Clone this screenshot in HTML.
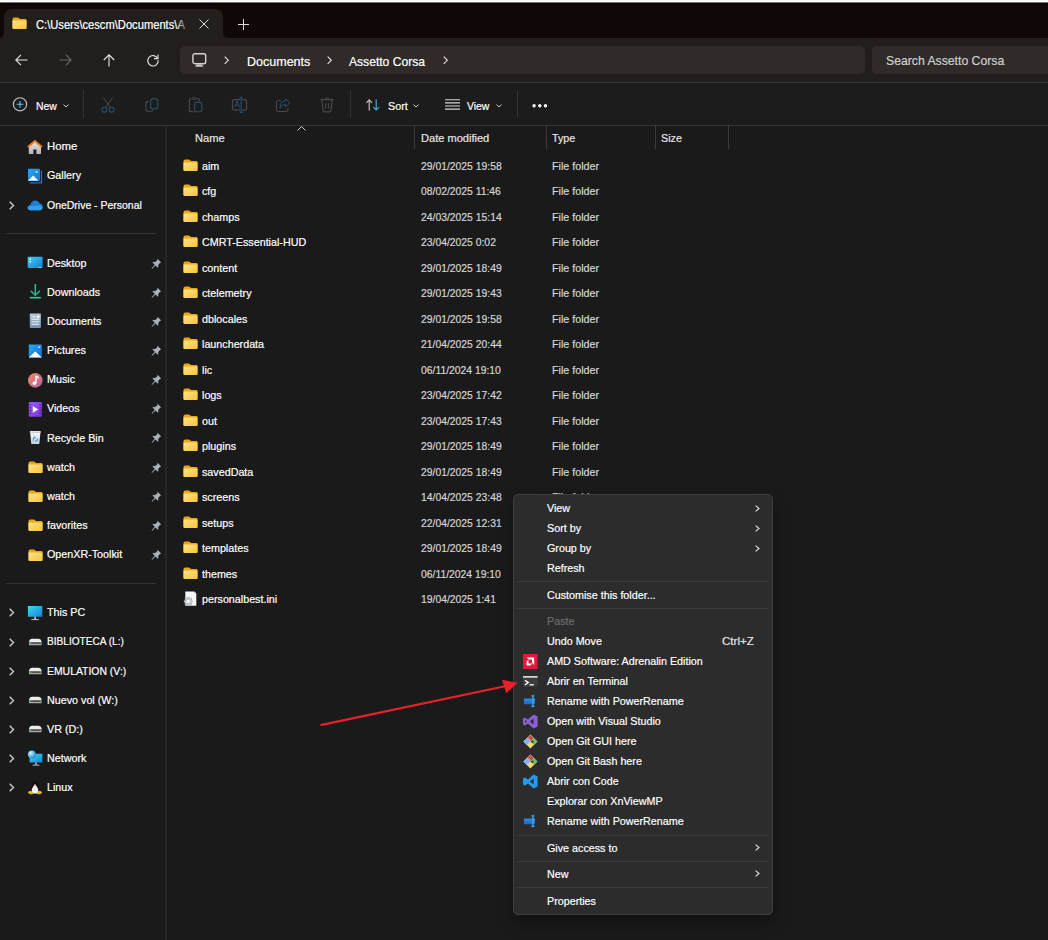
<!DOCTYPE html>
<html><head><meta charset="utf-8"><style>
html,body{margin:0;padding:0;}
body{width:1048px;height:940px;position:relative;overflow:hidden;background:#1a1a1a;font-family:"Liberation Sans", sans-serif;}
.t{position:absolute;white-space:nowrap;line-height:1;-webkit-text-stroke:0.2px currentColor;}
.r{position:absolute;}
svg{overflow:visible}
</style></head><body>
<div class="r" style="left:0px;top:0px;width:1048px;height:1px;background:#f9f9f9;"></div>
<div class="r" style="left:0px;top:1px;width:1048px;height:1px;background:#ffffff;"></div>
<div class="r" style="left:0px;top:2px;width:1048px;height:1px;background:#777070;"></div>
<div class="r" style="left:0px;top:3px;width:1048px;height:1px;background:#0b0302;"></div>
<div class="r" style="left:0px;top:4px;width:1048px;height:34px;background:#100806;"></div>
<div class="r" style="left:0px;top:30px;width:1048px;height:9px;background:#221e1b;"></div>
<div class="r" style="left:0px;top:39px;width:1048px;height:43px;background:#221e1b;"></div>
<div class="r" style="left:4px;top:9px;width:219px;height:30px;background:#221e1b;border-radius:8px 8px 0 0;"></div>
<div class="r" style="left:-20px;top:3px;width:24px;height:35px;background:#100806;border-radius:0 0 5px 0;"></div>
<div class="r" style="left:223px;top:3px;width:900px;height:35px;background:#100806;border-radius:0 0 0 5px;"></div>
<div class="r" style="left:0px;top:2px;width:1048px;height:1px;background:#777070;"></div>
<div class="r" style="left:0px;top:3px;width:1048px;height:1px;background:#0b0302;"></div>
<div class="r" style="left:0px;top:82px;width:1048px;height:1px;background:#363636;"></div>
<div class="r" style="left:0px;top:83px;width:1048px;height:42px;background:#1c1c1c;"></div>
<div class="r" style="left:0px;top:125px;width:1048px;height:1px;background:#373737;"></div>
<div class="r" style="left:0px;top:126px;width:1048px;height:814px;background:#1a1a1a;"></div>
<div class="r" style="left:165px;top:126px;width:2px;height:814px;background:#262626;"></div>
<div class="r" style="left:180px;top:46px;width:685px;height:28px;background:#302a28;border-radius:5px;"></div>
<div class="r" style="left:872px;top:46px;width:200px;height:28px;background:#302b28;border-radius:5px;"></div>
<svg width="0" height="0" style="position:absolute"><defs>
<linearGradient id="fg" x1="0" y1="0" x2="1" y2="1"><stop offset="0" stop-color="#ffe389"/><stop offset="1" stop-color="#f8c43a"/></linearGradient>
</defs></svg>
<svg style="position:absolute;left:12px;top:17px" width="15" height="12" viewBox="0 0 15 12"><path d="M0.5 2.2 Q0.5 0.5 2.2 0.5 H5.6 Q6.4 0.5 7.0 1.1 L7.9 2.0 H13.3 Q14.5 2.0 14.5 3.2 V10.8 Q14.5 12 13.3 12 H1.7 Q0.5 12 0.5 10.8 Z" fill="#e9a812"/>
<path d="M0.5 3.6 H14.5 V10.8 Q14.5 12 13.3 12 H1.7 Q0.5 12 0.5 10.8 Z" fill="url(#fg)"/></svg>
<div class="t" style="left:36px;top:18.64px;font-size:12px;color:#ffffff;transform:scaleX(0.93);transform-origin:0 0;">C:\Users\cescm\Documents\A</div>
<div class="r" style="left:176px;top:12px;width:14px;height:24px;background:linear-gradient(90deg,rgba(34,30,27,0),#221e1b);"></div>
<svg style="position:absolute;left:199px;top:19px" width="10" height="10" viewBox="0 0 10 10"><path d="M0.5 0.5 L9.5 9.5 M9.5 0.5 L0.5 9.5" stroke="#dcdcdc" stroke-width="1"/></svg>
<svg style="position:absolute;left:238px;top:19px" width="11" height="11" viewBox="0 0 11 11"><path d="M5.5 0 V11 M0 5.5 H11" stroke="#dcdcdc" stroke-width="1"/></svg>
<svg style="position:absolute;left:15px;top:54px" width="13" height="12" viewBox="0 0 13 12"><path d="M0.8 6 H12.5 M6 0.8 L0.8 6 L6 11.2" stroke="#e6e6e6" stroke-width="1.1" fill="none"/></svg>
<svg style="position:absolute;left:59px;top:54px" width="13" height="12" viewBox="0 0 13 12"><g transform="translate(13,0) scale(-1,1)"><path d="M0.8 6 H12.5 M6 0.8 L0.8 6 L6 11.2" stroke="#6b6765" stroke-width="1.1" fill="none"/></g></svg>
<svg style="position:absolute;left:103px;top:54px" width="12" height="13" viewBox="0 0 12 13"><path d="M6 0.8 V12.5 M0.8 6 L6 0.8 L11.2 6" stroke="#e6e6e6" stroke-width="1.1" fill="none"/></svg>
<svg style="position:absolute;left:147px;top:54px" width="12" height="12" viewBox="0 0 12 12"><path d="M10.6 4.3 A5.2 5.2 0 1 0 11.2 6.3" stroke="#e6e6e6" stroke-width="1.1" fill="none"/><path d="M11 0.6 V4.6 H7" stroke="#e6e6e6" stroke-width="1.1" fill="none"/></svg>
<svg style="position:absolute;left:192px;top:53px" width="15" height="14" viewBox="0 0 15 14"><rect x="0.9" y="0.8" width="12.8" height="9.9" rx="2" stroke="#d4d4d4" stroke-width="1.4" fill="none"/><path d="M3.2 13.8 L4.6 11.4 H10 L11.4 13.8 Z" fill="#c8c8c8"/></svg>
<svg style="position:absolute;left:224px;top:56px" width="5" height="9" viewBox="0 0 5 9"><path d="M0.7 0.7 L4.3 4.3 L0.7 7.9" stroke="#e6e6e6" stroke-width="1.1" fill="none"/></svg>
<svg style="position:absolute;left:327px;top:56px" width="5" height="9" viewBox="0 0 5 9"><path d="M0.7 0.7 L4.3 4.3 L0.7 7.9" stroke="#e6e6e6" stroke-width="1.1" fill="none"/></svg>
<svg style="position:absolute;left:443px;top:56px" width="5" height="9" viewBox="0 0 5 9"><path d="M0.7 0.7 L4.3 4.3 L0.7 7.9" stroke="#e6e6e6" stroke-width="1.1" fill="none"/></svg>
<div class="t" style="left:246.7px;top:54.50px;font-size:13px;color:#ffffff;transform:scaleX(0.963);transform-origin:0 0;">Documents</div>
<div class="t" style="left:349px;top:54.50px;font-size:13px;color:#ffffff;transform:scaleX(0.93);transform-origin:0 0;">Assetto Corsa</div>
<div class="t" style="left:885.6px;top:54.40px;font-size:13px;color:#cfcfcf;transform:scaleX(0.94);transform-origin:0 0;">Search Assetto Corsa</div>
<svg style="position:absolute;left:13px;top:97px" width="15" height="15" viewBox="0 0 15 15"><circle cx="7" cy="7.3" r="6.6" stroke="#c8c8c8" stroke-width="1.1" fill="none"/><path d="M7 3.9 V10.7 M3.6 7.3 H10.4" stroke="#5cc4f6" stroke-width="1.1"/></svg>
<div class="t" style="left:35.8px;top:99.78px;font-size:11.6px;color:#ffffff;transform:scaleX(0.89822);transform-origin:0 0;">New</div>
<svg style="position:absolute;left:63px;top:104px" width="6" height="4" viewBox="0 0 6 4"><path d="M0.5 0.5 L3 3 L5.5 0.5" stroke="#cccccc" stroke-width="1" fill="none"/></svg>
<div class="r" style="left:83px;top:90px;width:1px;height:28px;background:#333333;"></div>
<svg style="position:absolute;left:101px;top:97px" width="14" height="16" viewBox="0 0 14 16"><path d="M2.4 0.7 L9.3 10.3 M11.6 0.7 L4.7 10.3" stroke="#4a4a4a" stroke-width="1"/><circle cx="3.4" cy="12.7" r="2.4" stroke="#24506e" stroke-width="1.1" fill="none"/><circle cx="10.6" cy="12.7" r="2.4" stroke="#24506e" stroke-width="1.1" fill="none"/></svg>
<svg style="position:absolute;left:145px;top:98px" width="14" height="14" viewBox="0 0 14 14"><rect x="5.6" y="0.9" width="7.2" height="9.8" rx="2" stroke="#24506e" stroke-width="1.1" fill="none"/><path d="M3.3 3.4 Q0.9 3.6 0.9 6 V11 Q0.9 13.3 3.2 13.3 H6 Q8 13.3 8.2 11.5" stroke="#4a4a4a" stroke-width="1.1" fill="none"/></svg>
<svg style="position:absolute;left:188px;top:97px" width="15" height="16" viewBox="0 0 15 16"><path d="M2.8 1.8 H2.4 Q1.4 1.8 1.4 2.8 V13.8 Q1.4 14.6 2.4 14.6 H5.2" stroke="#4a4a4a" stroke-width="1.1" fill="none"/><ellipse cx="6.3" cy="1.5" rx="2.6" ry="0.9" fill="none" stroke="#4a4a4a" stroke-width="1"/><path d="M9.2 1.8 H10.2 Q11.4 1.8 11.4 3 V4.2" stroke="#4a4a4a" stroke-width="1.1" fill="none"/><rect x="6.6" y="5.4" width="7.2" height="9.4" rx="1.6" stroke="#24506e" stroke-width="1.1" fill="none"/></svg>
<svg style="position:absolute;left:231px;top:97px" width="17" height="16" viewBox="0 0 17 16"><path d="M9 2.6 H3.6 Q1.4 2.6 1.4 4.8 V11 Q1.4 13.1 3.6 13.1 H9 M11.3 2.6 H13.5 Q15.6 2.6 15.6 4.8 V11 Q15.6 13.1 13.5 13.1 H11.3" stroke="#4a4a4a" stroke-width="1.1" fill="none"/><path d="M10.1 0.6 V15.4 M8.6 0.6 H11.6 M8.6 15.4 H11.6" stroke="#24506e" stroke-width="1.1" fill="none"/><path d="M3.6 10.4 L6.1 3.8 L8.6 10.4 M4.5 8.2 H7.7" stroke="#24506e" stroke-width="1" fill="none"/></svg>
<svg style="position:absolute;left:276px;top:98px" width="15" height="14" viewBox="0 0 15 14"><path d="M5 2.5 H2.5 Q0.5 2.5 0.5 4.5 V11.5 Q0.5 13.5 2.5 13.5 H10 Q12 13.5 12 11.5 V10" stroke="#4a4a4a" stroke-width="1" fill="none"/><path d="M9.5 0.8 L14 4.8 L9.5 8.6 V6.5 Q5.5 6.5 4 10 Q4 3 9.5 3 Z" stroke="#24506e" stroke-width="1" fill="none"/></svg>
<svg style="position:absolute;left:320px;top:97px" width="14" height="16" viewBox="0 0 14 16"><path d="M0.6 2.6 H13.4 M5.2 2.4 Q5.5 0.8 7 0.8 Q8.5 0.8 8.8 2.4 M1.8 2.6 L3.1 13.6 Q3.3 14.9 4.6 14.9 H9.4 Q10.7 14.9 10.9 13.6 L12.2 2.6 M5.6 6 V11.6 M8.4 6 V11.6" stroke="#4a4a4a" stroke-width="1.1" fill="none"/></svg>
<div class="r" style="left:350px;top:90px;width:1px;height:28px;background:#333333;"></div>
<svg style="position:absolute;left:365.5px;top:99px" width="15" height="12" viewBox="0 0 15 12"><path d="M3.2 11.4 V0.9 M0.4 3.8 L3.2 0.9 L6 3.8" stroke="#bdbdbd" stroke-width="1.2" fill="none"/><path d="M10.2 0.5 V11 M7.3 8.1 L10.2 11 L13.1 8.1" stroke="#3fa9e6" stroke-width="1.2" fill="none"/></svg>
<div class="t" style="left:387.8px;top:99.78px;font-size:11.6px;color:#ffffff;transform:scaleX(0.926);transform-origin:0 0;">Sort</div>
<svg style="position:absolute;left:413px;top:104px" width="6" height="4" viewBox="0 0 6 4"><path d="M0.5 0.5 L3 3 L5.5 0.5" stroke="#cccccc" stroke-width="1" fill="none"/></svg>
<svg style="position:absolute;left:445px;top:99px" width="15" height="12" viewBox="0 0 15 12"><path d="M0 0.8 H15 M0 3.9 H15 M0 7 H15 M0 10.1 H15" stroke="#d6d6d6" stroke-width="1.1"/></svg>
<div class="t" style="left:467px;top:99.78px;font-size:11.6px;color:#ffffff;transform:scaleX(0.89822);transform-origin:0 0;">View</div>
<svg style="position:absolute;left:496px;top:104px" width="6" height="4" viewBox="0 0 6 4"><path d="M0.5 0.5 L3 3 L5.5 0.5" stroke="#cccccc" stroke-width="1" fill="none"/></svg>
<div class="r" style="left:517px;top:90px;width:1px;height:28px;background:#333333;"></div>
<svg style="position:absolute;left:530px;top:102px" width="20" height="8" viewBox="0 0 20 8"><circle cx="4.1" cy="3.7" r="1.7" fill="#ffffff"/><circle cx="9.8" cy="3.7" r="1.7" fill="#ffffff"/><circle cx="15.5" cy="3.7" r="1.7" fill="#ffffff"/></svg>
<div class="t" style="left:195px;top:132.18px;font-size:11.6px;color:#e6e6e6;transform:scaleX(0.9630400000000001);transform-origin:0 0;">Name</div>
<svg style="position:absolute;left:297px;top:126px" width="9" height="5" viewBox="0 0 9 5"><path d="M0.5 4.5 L4.5 0.5 L8.5 4.5" stroke="#cfcfcf" stroke-width="1" fill="none"/></svg>
<div class="r" style="left:414px;top:126px;width:1px;height:23px;background:#3a3a3a;"></div>
<div class="r" style="left:546px;top:126px;width:1px;height:23px;background:#3a3a3a;"></div>
<div class="r" style="left:655px;top:126px;width:1px;height:23px;background:#3a3a3a;"></div>
<div class="r" style="left:728px;top:126px;width:1px;height:23px;background:#3a3a3a;"></div>
<div class="t" style="left:420.6px;top:132.18px;font-size:11.6px;color:#e6e6e6;transform:scaleX(0.9537800000000001);transform-origin:0 0;">Date modified</div>
<div class="t" style="left:552px;top:132.18px;font-size:11.6px;color:#e6e6e6;transform:scaleX(0.926);transform-origin:0 0;">Type</div>
<div class="t" style="left:661px;top:132.18px;font-size:11.6px;color:#e6e6e6;transform:scaleX(0.926);transform-origin:0 0;">Size</div>
<svg style="position:absolute;left:183px;top:159px" width="15" height="12" viewBox="0 0 15 12"><path d="M0.5 2.2 Q0.5 0.5 2.2 0.5 H5.6 Q6.4 0.5 7.0 1.1 L7.9 2.0 H13.3 Q14.5 2.0 14.5 3.2 V10.8 Q14.5 12 13.3 12 H1.7 Q0.5 12 0.5 10.8 Z" fill="#e9a812"/>
<path d="M0.5 3.6 H14.5 V10.8 Q14.5 12 13.3 12 H1.7 Q0.5 12 0.5 10.8 Z" fill="url(#fg)"/></svg>
<div class="t" style="left:202.2px;top:159.88px;font-size:11.6px;color:#ffffff;transform:scaleX(0.926);transform-origin:0 0;">aim</div>
<div class="t" style="left:420.6px;top:159.88px;font-size:11.6px;color:#d6d6d6;transform:scaleX(0.89359);transform-origin:0 0;">29/01/2025 19:58</div>
<div class="t" style="left:552px;top:159.88px;font-size:11.6px;color:#d6d6d6;transform:scaleX(0.926);transform-origin:0 0;">File folder</div>
<svg style="position:absolute;left:183px;top:184px" width="15" height="12" viewBox="0 0 15 12"><path d="M0.5 2.2 Q0.5 0.5 2.2 0.5 H5.6 Q6.4 0.5 7.0 1.1 L7.9 2.0 H13.3 Q14.5 2.0 14.5 3.2 V10.8 Q14.5 12 13.3 12 H1.7 Q0.5 12 0.5 10.8 Z" fill="#e9a812"/>
<path d="M0.5 3.6 H14.5 V10.8 Q14.5 12 13.3 12 H1.7 Q0.5 12 0.5 10.8 Z" fill="url(#fg)"/></svg>
<div class="t" style="left:202.2px;top:185.38px;font-size:11.6px;color:#ffffff;transform:scaleX(0.926);transform-origin:0 0;">cfg</div>
<div class="t" style="left:420.6px;top:185.38px;font-size:11.6px;color:#d6d6d6;transform:scaleX(0.89359);transform-origin:0 0;">08/02/2025 11:46</div>
<div class="t" style="left:552px;top:185.38px;font-size:11.6px;color:#d6d6d6;transform:scaleX(0.926);transform-origin:0 0;">File folder</div>
<svg style="position:absolute;left:183px;top:210px" width="15" height="12" viewBox="0 0 15 12"><path d="M0.5 2.2 Q0.5 0.5 2.2 0.5 H5.6 Q6.4 0.5 7.0 1.1 L7.9 2.0 H13.3 Q14.5 2.0 14.5 3.2 V10.8 Q14.5 12 13.3 12 H1.7 Q0.5 12 0.5 10.8 Z" fill="#e9a812"/>
<path d="M0.5 3.6 H14.5 V10.8 Q14.5 12 13.3 12 H1.7 Q0.5 12 0.5 10.8 Z" fill="url(#fg)"/></svg>
<div class="t" style="left:202.2px;top:210.88px;font-size:11.6px;color:#ffffff;transform:scaleX(0.926);transform-origin:0 0;">champs</div>
<div class="t" style="left:420.6px;top:210.88px;font-size:11.6px;color:#d6d6d6;transform:scaleX(0.89359);transform-origin:0 0;">24/03/2025 15:14</div>
<div class="t" style="left:552px;top:210.88px;font-size:11.6px;color:#d6d6d6;transform:scaleX(0.926);transform-origin:0 0;">File folder</div>
<svg style="position:absolute;left:183px;top:235px" width="15" height="12" viewBox="0 0 15 12"><path d="M0.5 2.2 Q0.5 0.5 2.2 0.5 H5.6 Q6.4 0.5 7.0 1.1 L7.9 2.0 H13.3 Q14.5 2.0 14.5 3.2 V10.8 Q14.5 12 13.3 12 H1.7 Q0.5 12 0.5 10.8 Z" fill="#e9a812"/>
<path d="M0.5 3.6 H14.5 V10.8 Q14.5 12 13.3 12 H1.7 Q0.5 12 0.5 10.8 Z" fill="url(#fg)"/></svg>
<div class="t" style="left:202.2px;top:236.38px;font-size:11.6px;color:#ffffff;transform:scaleX(0.926);transform-origin:0 0;">CMRT-Essential-HUD</div>
<div class="t" style="left:420.6px;top:236.38px;font-size:11.6px;color:#d6d6d6;transform:scaleX(0.89359);transform-origin:0 0;">23/04/2025 0:02</div>
<div class="t" style="left:552px;top:236.38px;font-size:11.6px;color:#d6d6d6;transform:scaleX(0.926);transform-origin:0 0;">File folder</div>
<svg style="position:absolute;left:183px;top:261px" width="15" height="12" viewBox="0 0 15 12"><path d="M0.5 2.2 Q0.5 0.5 2.2 0.5 H5.6 Q6.4 0.5 7.0 1.1 L7.9 2.0 H13.3 Q14.5 2.0 14.5 3.2 V10.8 Q14.5 12 13.3 12 H1.7 Q0.5 12 0.5 10.8 Z" fill="#e9a812"/>
<path d="M0.5 3.6 H14.5 V10.8 Q14.5 12 13.3 12 H1.7 Q0.5 12 0.5 10.8 Z" fill="url(#fg)"/></svg>
<div class="t" style="left:202.2px;top:261.88px;font-size:11.6px;color:#ffffff;transform:scaleX(0.926);transform-origin:0 0;">content</div>
<div class="t" style="left:420.6px;top:261.88px;font-size:11.6px;color:#d6d6d6;transform:scaleX(0.89359);transform-origin:0 0;">29/01/2025 18:49</div>
<div class="t" style="left:552px;top:261.88px;font-size:11.6px;color:#d6d6d6;transform:scaleX(0.926);transform-origin:0 0;">File folder</div>
<svg style="position:absolute;left:183px;top:286px" width="15" height="12" viewBox="0 0 15 12"><path d="M0.5 2.2 Q0.5 0.5 2.2 0.5 H5.6 Q6.4 0.5 7.0 1.1 L7.9 2.0 H13.3 Q14.5 2.0 14.5 3.2 V10.8 Q14.5 12 13.3 12 H1.7 Q0.5 12 0.5 10.8 Z" fill="#e9a812"/>
<path d="M0.5 3.6 H14.5 V10.8 Q14.5 12 13.3 12 H1.7 Q0.5 12 0.5 10.8 Z" fill="url(#fg)"/></svg>
<div class="t" style="left:202.2px;top:287.38px;font-size:11.6px;color:#ffffff;transform:scaleX(0.926);transform-origin:0 0;">ctelemetry</div>
<div class="t" style="left:420.6px;top:287.38px;font-size:11.6px;color:#d6d6d6;transform:scaleX(0.89359);transform-origin:0 0;">29/01/2025 19:43</div>
<div class="t" style="left:552px;top:287.38px;font-size:11.6px;color:#d6d6d6;transform:scaleX(0.926);transform-origin:0 0;">File folder</div>
<svg style="position:absolute;left:183px;top:312px" width="15" height="12" viewBox="0 0 15 12"><path d="M0.5 2.2 Q0.5 0.5 2.2 0.5 H5.6 Q6.4 0.5 7.0 1.1 L7.9 2.0 H13.3 Q14.5 2.0 14.5 3.2 V10.8 Q14.5 12 13.3 12 H1.7 Q0.5 12 0.5 10.8 Z" fill="#e9a812"/>
<path d="M0.5 3.6 H14.5 V10.8 Q14.5 12 13.3 12 H1.7 Q0.5 12 0.5 10.8 Z" fill="url(#fg)"/></svg>
<div class="t" style="left:202.2px;top:312.88px;font-size:11.6px;color:#ffffff;transform:scaleX(0.926);transform-origin:0 0;">dblocales</div>
<div class="t" style="left:420.6px;top:312.88px;font-size:11.6px;color:#d6d6d6;transform:scaleX(0.89359);transform-origin:0 0;">29/01/2025 19:58</div>
<div class="t" style="left:552px;top:312.88px;font-size:11.6px;color:#d6d6d6;transform:scaleX(0.926);transform-origin:0 0;">File folder</div>
<svg style="position:absolute;left:183px;top:337px" width="15" height="12" viewBox="0 0 15 12"><path d="M0.5 2.2 Q0.5 0.5 2.2 0.5 H5.6 Q6.4 0.5 7.0 1.1 L7.9 2.0 H13.3 Q14.5 2.0 14.5 3.2 V10.8 Q14.5 12 13.3 12 H1.7 Q0.5 12 0.5 10.8 Z" fill="#e9a812"/>
<path d="M0.5 3.6 H14.5 V10.8 Q14.5 12 13.3 12 H1.7 Q0.5 12 0.5 10.8 Z" fill="url(#fg)"/></svg>
<div class="t" style="left:202.2px;top:338.38px;font-size:11.6px;color:#ffffff;transform:scaleX(0.926);transform-origin:0 0;">launcherdata</div>
<div class="t" style="left:420.6px;top:338.38px;font-size:11.6px;color:#d6d6d6;transform:scaleX(0.89359);transform-origin:0 0;">21/04/2025 20:44</div>
<div class="t" style="left:552px;top:338.38px;font-size:11.6px;color:#d6d6d6;transform:scaleX(0.926);transform-origin:0 0;">File folder</div>
<svg style="position:absolute;left:183px;top:363px" width="15" height="12" viewBox="0 0 15 12"><path d="M0.5 2.2 Q0.5 0.5 2.2 0.5 H5.6 Q6.4 0.5 7.0 1.1 L7.9 2.0 H13.3 Q14.5 2.0 14.5 3.2 V10.8 Q14.5 12 13.3 12 H1.7 Q0.5 12 0.5 10.8 Z" fill="#e9a812"/>
<path d="M0.5 3.6 H14.5 V10.8 Q14.5 12 13.3 12 H1.7 Q0.5 12 0.5 10.8 Z" fill="url(#fg)"/></svg>
<div class="t" style="left:202.2px;top:363.88px;font-size:11.6px;color:#ffffff;transform:scaleX(0.926);transform-origin:0 0;">lic</div>
<div class="t" style="left:420.6px;top:363.88px;font-size:11.6px;color:#d6d6d6;transform:scaleX(0.89359);transform-origin:0 0;">06/11/2024 19:10</div>
<div class="t" style="left:552px;top:363.88px;font-size:11.6px;color:#d6d6d6;transform:scaleX(0.926);transform-origin:0 0;">File folder</div>
<svg style="position:absolute;left:183px;top:388px" width="15" height="12" viewBox="0 0 15 12"><path d="M0.5 2.2 Q0.5 0.5 2.2 0.5 H5.6 Q6.4 0.5 7.0 1.1 L7.9 2.0 H13.3 Q14.5 2.0 14.5 3.2 V10.8 Q14.5 12 13.3 12 H1.7 Q0.5 12 0.5 10.8 Z" fill="#e9a812"/>
<path d="M0.5 3.6 H14.5 V10.8 Q14.5 12 13.3 12 H1.7 Q0.5 12 0.5 10.8 Z" fill="url(#fg)"/></svg>
<div class="t" style="left:202.2px;top:389.38px;font-size:11.6px;color:#ffffff;transform:scaleX(0.926);transform-origin:0 0;">logs</div>
<div class="t" style="left:420.6px;top:389.38px;font-size:11.6px;color:#d6d6d6;transform:scaleX(0.89359);transform-origin:0 0;">23/04/2025 17:42</div>
<div class="t" style="left:552px;top:389.38px;font-size:11.6px;color:#d6d6d6;transform:scaleX(0.926);transform-origin:0 0;">File folder</div>
<svg style="position:absolute;left:183px;top:414px" width="15" height="12" viewBox="0 0 15 12"><path d="M0.5 2.2 Q0.5 0.5 2.2 0.5 H5.6 Q6.4 0.5 7.0 1.1 L7.9 2.0 H13.3 Q14.5 2.0 14.5 3.2 V10.8 Q14.5 12 13.3 12 H1.7 Q0.5 12 0.5 10.8 Z" fill="#e9a812"/>
<path d="M0.5 3.6 H14.5 V10.8 Q14.5 12 13.3 12 H1.7 Q0.5 12 0.5 10.8 Z" fill="url(#fg)"/></svg>
<div class="t" style="left:202.2px;top:414.88px;font-size:11.6px;color:#ffffff;transform:scaleX(0.926);transform-origin:0 0;">out</div>
<div class="t" style="left:420.6px;top:414.88px;font-size:11.6px;color:#d6d6d6;transform:scaleX(0.89359);transform-origin:0 0;">23/04/2025 17:43</div>
<div class="t" style="left:552px;top:414.88px;font-size:11.6px;color:#d6d6d6;transform:scaleX(0.926);transform-origin:0 0;">File folder</div>
<svg style="position:absolute;left:183px;top:439px" width="15" height="12" viewBox="0 0 15 12"><path d="M0.5 2.2 Q0.5 0.5 2.2 0.5 H5.6 Q6.4 0.5 7.0 1.1 L7.9 2.0 H13.3 Q14.5 2.0 14.5 3.2 V10.8 Q14.5 12 13.3 12 H1.7 Q0.5 12 0.5 10.8 Z" fill="#e9a812"/>
<path d="M0.5 3.6 H14.5 V10.8 Q14.5 12 13.3 12 H1.7 Q0.5 12 0.5 10.8 Z" fill="url(#fg)"/></svg>
<div class="t" style="left:202.2px;top:440.38px;font-size:11.6px;color:#ffffff;transform:scaleX(0.926);transform-origin:0 0;">plugins</div>
<div class="t" style="left:420.6px;top:440.38px;font-size:11.6px;color:#d6d6d6;transform:scaleX(0.89359);transform-origin:0 0;">29/01/2025 18:49</div>
<div class="t" style="left:552px;top:440.38px;font-size:11.6px;color:#d6d6d6;transform:scaleX(0.926);transform-origin:0 0;">File folder</div>
<svg style="position:absolute;left:183px;top:465px" width="15" height="12" viewBox="0 0 15 12"><path d="M0.5 2.2 Q0.5 0.5 2.2 0.5 H5.6 Q6.4 0.5 7.0 1.1 L7.9 2.0 H13.3 Q14.5 2.0 14.5 3.2 V10.8 Q14.5 12 13.3 12 H1.7 Q0.5 12 0.5 10.8 Z" fill="#e9a812"/>
<path d="M0.5 3.6 H14.5 V10.8 Q14.5 12 13.3 12 H1.7 Q0.5 12 0.5 10.8 Z" fill="url(#fg)"/></svg>
<div class="t" style="left:202.2px;top:465.88px;font-size:11.6px;color:#ffffff;transform:scaleX(0.926);transform-origin:0 0;">savedData</div>
<div class="t" style="left:420.6px;top:465.88px;font-size:11.6px;color:#d6d6d6;transform:scaleX(0.89359);transform-origin:0 0;">29/01/2025 18:49</div>
<div class="t" style="left:552px;top:465.88px;font-size:11.6px;color:#d6d6d6;transform:scaleX(0.926);transform-origin:0 0;">File folder</div>
<svg style="position:absolute;left:183px;top:490px" width="15" height="12" viewBox="0 0 15 12"><path d="M0.5 2.2 Q0.5 0.5 2.2 0.5 H5.6 Q6.4 0.5 7.0 1.1 L7.9 2.0 H13.3 Q14.5 2.0 14.5 3.2 V10.8 Q14.5 12 13.3 12 H1.7 Q0.5 12 0.5 10.8 Z" fill="#e9a812"/>
<path d="M0.5 3.6 H14.5 V10.8 Q14.5 12 13.3 12 H1.7 Q0.5 12 0.5 10.8 Z" fill="url(#fg)"/></svg>
<div class="t" style="left:202.2px;top:491.38px;font-size:11.6px;color:#ffffff;transform:scaleX(0.926);transform-origin:0 0;">screens</div>
<div class="t" style="left:420.6px;top:491.38px;font-size:11.6px;color:#d6d6d6;transform:scaleX(0.89359);transform-origin:0 0;">14/04/2025 23:48</div>
<div class="t" style="left:552px;top:491.38px;font-size:11.6px;color:#d6d6d6;transform:scaleX(0.926);transform-origin:0 0;">File folder</div>
<svg style="position:absolute;left:183px;top:516px" width="15" height="12" viewBox="0 0 15 12"><path d="M0.5 2.2 Q0.5 0.5 2.2 0.5 H5.6 Q6.4 0.5 7.0 1.1 L7.9 2.0 H13.3 Q14.5 2.0 14.5 3.2 V10.8 Q14.5 12 13.3 12 H1.7 Q0.5 12 0.5 10.8 Z" fill="#e9a812"/>
<path d="M0.5 3.6 H14.5 V10.8 Q14.5 12 13.3 12 H1.7 Q0.5 12 0.5 10.8 Z" fill="url(#fg)"/></svg>
<div class="t" style="left:202.2px;top:516.88px;font-size:11.6px;color:#ffffff;transform:scaleX(0.926);transform-origin:0 0;">setups</div>
<div class="t" style="left:420.6px;top:516.88px;font-size:11.6px;color:#d6d6d6;transform:scaleX(0.89359);transform-origin:0 0;">22/04/2025 12:31</div>
<div class="t" style="left:552px;top:516.88px;font-size:11.6px;color:#d6d6d6;transform:scaleX(0.926);transform-origin:0 0;">File folder</div>
<svg style="position:absolute;left:183px;top:541px" width="15" height="12" viewBox="0 0 15 12"><path d="M0.5 2.2 Q0.5 0.5 2.2 0.5 H5.6 Q6.4 0.5 7.0 1.1 L7.9 2.0 H13.3 Q14.5 2.0 14.5 3.2 V10.8 Q14.5 12 13.3 12 H1.7 Q0.5 12 0.5 10.8 Z" fill="#e9a812"/>
<path d="M0.5 3.6 H14.5 V10.8 Q14.5 12 13.3 12 H1.7 Q0.5 12 0.5 10.8 Z" fill="url(#fg)"/></svg>
<div class="t" style="left:202.2px;top:542.38px;font-size:11.6px;color:#ffffff;transform:scaleX(0.926);transform-origin:0 0;">templates</div>
<div class="t" style="left:420.6px;top:542.38px;font-size:11.6px;color:#d6d6d6;transform:scaleX(0.89359);transform-origin:0 0;">29/01/2025 18:49</div>
<div class="t" style="left:552px;top:542.38px;font-size:11.6px;color:#d6d6d6;transform:scaleX(0.926);transform-origin:0 0;">File folder</div>
<svg style="position:absolute;left:183px;top:567px" width="15" height="12" viewBox="0 0 15 12"><path d="M0.5 2.2 Q0.5 0.5 2.2 0.5 H5.6 Q6.4 0.5 7.0 1.1 L7.9 2.0 H13.3 Q14.5 2.0 14.5 3.2 V10.8 Q14.5 12 13.3 12 H1.7 Q0.5 12 0.5 10.8 Z" fill="#e9a812"/>
<path d="M0.5 3.6 H14.5 V10.8 Q14.5 12 13.3 12 H1.7 Q0.5 12 0.5 10.8 Z" fill="url(#fg)"/></svg>
<div class="t" style="left:202.2px;top:567.88px;font-size:11.6px;color:#ffffff;transform:scaleX(0.926);transform-origin:0 0;">themes</div>
<div class="t" style="left:420.6px;top:567.88px;font-size:11.6px;color:#d6d6d6;transform:scaleX(0.89359);transform-origin:0 0;">06/11/2024 19:10</div>
<div class="t" style="left:552px;top:567.88px;font-size:11.6px;color:#d6d6d6;transform:scaleX(0.926);transform-origin:0 0;">File folder</div>
<svg style="position:absolute;left:183px;top:591px" width="15" height="15" viewBox="0 0 15 15"><path d="M2.3 0.4 H11.2 L13.3 2.5 V14.8 H2.3 Z" fill="#f6f6f6"/><path d="M11.2 0.4 V2.5 H13.3" fill="#d0d0d0"/><path d="M9.90 10.40 L8.53 11.74 L8.55 13.65 L6.64 13.63 L5.30 15.00 L3.96 13.63 L2.05 13.65 L2.07 11.74 L0.70 10.40 L2.07 9.06 L2.05 7.15 L3.96 7.17 L5.30 5.80 L6.64 7.17 L8.55 7.15 L8.53 9.06 Z" fill="#c4c8cc" stroke="#9aa0a6" stroke-width="0.5"/><circle cx="5.3" cy="10.4" r="1.4" fill="#ffffff"/></svg>
<div class="t" style="left:202.2px;top:593.38px;font-size:11.6px;color:#ffffff;transform:scaleX(0.926);transform-origin:0 0;">personalbest.ini</div>
<div class="t" style="left:420.6px;top:593.38px;font-size:11.6px;color:#d6d6d6;transform:scaleX(0.89359);transform-origin:0 0;">19/04/2025 1:41</div>
<svg width="0" height="0" style="position:absolute"><defs>
<linearGradient id="docg" x1="0" y1="0" x2="0" y2="1"><stop offset="0" stop-color="#b8c8dc"/><stop offset="1" stop-color="#7890b2"/></linearGradient>
<linearGradient id="musg" x1="0" y1="0" x2="1" y2="1"><stop offset="0" stop-color="#f08a5a"/><stop offset="1" stop-color="#b860a8"/></linearGradient>
<linearGradient id="pcg" x1="0" y1="0" x2="1" y2="1"><stop offset="0" stop-color="#3adcf2"/><stop offset="1" stop-color="#1a7fd6"/></linearGradient>
<linearGradient id="homeg" x1="0" y1="0" x2="0" y2="1"><stop offset="0" stop-color="#e6e6e6"/><stop offset="1" stop-color="#b4b4b4"/></linearGradient>
<linearGradient id="galg" x1="0" y1="0" x2="1" y2="1"><stop offset="0" stop-color="#2aa6f2"/><stop offset="1" stop-color="#1676d2"/></linearGradient>
<linearGradient id="deskg" x1="0" y1="0" x2="1" y2="1"><stop offset="0" stop-color="#3cd0f0"/><stop offset="1" stop-color="#167ed4"/></linearGradient>
<linearGradient id="dlg" x1="0" y1="0" x2="0" y2="1"><stop offset="0" stop-color="#2fc89a"/><stop offset="1" stop-color="#1fa888"/></linearGradient>
<linearGradient id="picg" x1="0" y1="0" x2="1" y2="1"><stop offset="0" stop-color="#2aa8f4"/><stop offset="1" stop-color="#1470d0"/></linearGradient>
<linearGradient id="vidg" x1="0" y1="0" x2="1" y2="1"><stop offset="0" stop-color="#a05af0"/><stop offset="1" stop-color="#7a34d8"/></linearGradient>
<linearGradient id="recg" x1="0" y1="0" x2="0" y2="1"><stop offset="0" stop-color="#f4f7fa"/><stop offset="1" stop-color="#c9d2dc"/></linearGradient>
<radialGradient id="globeg" cx="0.35" cy="0.35" r="0.7"><stop offset="0" stop-color="#d8f2ff"/><stop offset="0.5" stop-color="#6ac0ea"/><stop offset="1" stop-color="#2a86c8"/></radialGradient>
</defs></svg>
<svg style="position:absolute;left:27px;top:139px" width="16" height="16" viewBox="0 0 16 16"><path d="M1.8 7.2 L7.9 2.2 L14 7.2 V14.9 H9.4 V10.6 H6.4 V14.9 H1.8 Z" fill="url(#homeg)"/><path d="M7.9 0.7 L15.6 7.3 L14.2 8.7 L7.9 3.3 L1.6 8.7 L0.2 7.3 Z" fill="#f07a22"/></svg>
<div class="t" style="left:47.4px;top:140.28px;font-size:11.6px;color:#ffffff;transform:scaleX(0.9815600000000001);transform-origin:0 0;">Home</div>
<svg style="position:absolute;left:27px;top:168px" width="16" height="16" viewBox="0 0 16 16"><path d="M13.8 2.6 H15.1 V15.6 H2.8 V14.2 H13.8 Z" fill="#2f6fc0"/><rect x="1" y="0.8" width="12" height="12" rx="0.6" fill="url(#galg)"/><path d="M1 12.8 L6.2 7.6 L11.6 12.8 Z" fill="#eef6ff"/><circle cx="9.6" cy="4" r="1.1" fill="#bfe6ff"/></svg>
<div class="t" style="left:47.4px;top:169.41px;font-size:11.6px;color:#ffffff;transform:scaleX(0.926);transform-origin:0 0;">Gallery</div>
<svg style="position:absolute;left:8.8px;top:201px" width="5" height="9" viewBox="0 0 5 9"><path d="M0.7 0.7 L4.5 4.5 L0.7 8.3" stroke="#cfcfcf" stroke-width="1.35" fill="none"/></svg>
<svg style="position:absolute;left:27px;top:197px" width="16" height="16" viewBox="0 0 16 16"><path d="M3.6 13.2 Q0.7 13.2 0.7 10.6 Q0.7 8.2 3.4 8 Q4.2 3.4 8.4 3.4 Q11.5 3.4 12.6 6.4 Q15.6 6.8 15.6 9.9 Q15.6 13.2 12.4 13.2 Z" fill="#1b7fd6"/><path d="M3.6 13.2 Q0.7 13.2 0.7 10.6 Q1.5 8.6 5.5 9.2 Q10 7.5 15.6 9.9 Q15.6 13.2 12.4 13.2 Z" fill="#2ea3ec"/></svg>
<div class="t" style="left:47.4px;top:198.54px;font-size:11.6px;color:#ffffff;transform:scaleX(0.90285);transform-origin:0 0;">OneDrive - Personal</div>
<svg style="position:absolute;left:27px;top:255px" width="16" height="16" viewBox="0 0 16 16"><rect x="0.7" y="1.8" width="14.9" height="11.1" rx="1" fill="url(#deskg)"/><rect x="2.3" y="3.6" width="1.8" height="1.4" fill="#d8f4ff"/><rect x="2.3" y="6" width="1.8" height="1.4" fill="#d8f4ff"/><rect x="11.5" y="12" width="1" height="0.9" fill="#d8f4ff"/><rect x="13.3" y="12" width="1" height="0.9" fill="#d8f4ff"/></svg>
<div class="t" style="left:47.4px;top:256.80px;font-size:11.6px;color:#ffffff;transform:scaleX(0.926);transform-origin:0 0;">Desktop</div>
<svg style="position:absolute;left:151px;top:258px" width="11" height="11" viewBox="0 0 11 11"><path d="M6.5 0.8 L10.2 4.5 L8.8 5 L7 7.5 L7.5 9 L6.8 9.7 L4.5 7.5 L1.2 10.8 L0.5 10.5 L3.8 6.8 L1.5 4.5 L2.2 3.8 L3.7 4.3 L6.2 2.4 Z" fill="#a9b2bb"/></svg>
<svg style="position:absolute;left:27px;top:284px" width="16" height="16" viewBox="0 0 16 16"><path d="M8.3 0 V11 M3.7 6.8 L8.3 11.4 L12.9 6.8" stroke="url(#dlg)" stroke-width="1.5" fill="none"/><rect x="2.8" y="12.9" width="11.1" height="1.6" fill="#2fc89a"/></svg>
<div class="t" style="left:47.4px;top:285.93px;font-size:11.6px;color:#ffffff;transform:scaleX(0.926);transform-origin:0 0;">Downloads</div>
<svg style="position:absolute;left:151px;top:287px" width="11" height="11" viewBox="0 0 11 11"><path d="M6.5 0.8 L10.2 4.5 L8.8 5 L7 7.5 L7.5 9 L6.8 9.7 L4.5 7.5 L1.2 10.8 L0.5 10.5 L3.8 6.8 L1.5 4.5 L2.2 3.8 L3.7 4.3 L6.2 2.4 Z" fill="#a9b2bb"/></svg>
<svg style="position:absolute;left:27px;top:313px" width="16" height="16" viewBox="0 0 16 16"><rect x="2.8" y="0.5" width="11.1" height="14.5" rx="0.8" fill="url(#docg)"/><path d="M4.6 3.8 H9 M4.6 6.3 H12.2 M4.6 8.8 H12.2 M4.6 11.3 H12.2" stroke="#eef2f8" stroke-width="1"/><rect x="10" y="2.6" width="2.3" height="2.3" fill="#ffffff"/></svg>
<div class="t" style="left:47.4px;top:315.06px;font-size:11.6px;color:#ffffff;transform:scaleX(0.926);transform-origin:0 0;">Documents</div>
<svg style="position:absolute;left:151px;top:316px" width="11" height="11" viewBox="0 0 11 11"><path d="M6.5 0.8 L10.2 4.5 L8.8 5 L7 7.5 L7.5 9 L6.8 9.7 L4.5 7.5 L1.2 10.8 L0.5 10.5 L3.8 6.8 L1.5 4.5 L2.2 3.8 L3.7 4.3 L6.2 2.4 Z" fill="#a9b2bb"/></svg>
<svg style="position:absolute;left:27px;top:343px" width="16" height="16" viewBox="0 0 16 16"><rect x="1.8" y="1.6" width="13" height="12.8" rx="0.6" fill="url(#picg)"/><path d="M1.8 14.4 L8.3 8.4 L14.8 14.4 Z" fill="#ffffff"/><circle cx="12.2" cy="4.1" r="0.9" fill="#e6f5ff"/></svg>
<div class="t" style="left:47.4px;top:344.19px;font-size:11.6px;color:#ffffff;transform:scaleX(0.926);transform-origin:0 0;">Pictures</div>
<svg style="position:absolute;left:151px;top:345px" width="11" height="11" viewBox="0 0 11 11"><path d="M6.5 0.8 L10.2 4.5 L8.8 5 L7 7.5 L7.5 9 L6.8 9.7 L4.5 7.5 L1.2 10.8 L0.5 10.5 L3.8 6.8 L1.5 4.5 L2.2 3.8 L3.7 4.3 L6.2 2.4 Z" fill="#a9b2bb"/></svg>
<svg style="position:absolute;left:27px;top:372px" width="16" height="16" viewBox="0 0 16 16"><circle cx="8.3" cy="8.35" r="7.3" fill="url(#musg)"/><path d="M9 3.8 V11 M9 3.8 Q11.3 4.5 11.5 6.5" stroke="#ffffff" stroke-width="1.4" fill="none"/><ellipse cx="7.4" cy="11.3" rx="1.9" ry="1.7" fill="#ffffff"/></svg>
<div class="t" style="left:47.4px;top:373.32px;font-size:11.6px;color:#ffffff;transform:scaleX(0.926);transform-origin:0 0;">Music</div>
<svg style="position:absolute;left:151px;top:374px" width="11" height="11" viewBox="0 0 11 11"><path d="M6.5 0.8 L10.2 4.5 L8.8 5 L7 7.5 L7.5 9 L6.8 9.7 L4.5 7.5 L1.2 10.8 L0.5 10.5 L3.8 6.8 L1.5 4.5 L2.2 3.8 L3.7 4.3 L6.2 2.4 Z" fill="#a9b2bb"/></svg>
<svg style="position:absolute;left:27px;top:401px" width="16" height="16" viewBox="0 0 16 16"><rect x="1.8" y="1" width="13" height="14.8" rx="1" fill="url(#vidg)"/><path d="M3.4 3 V14 M13.2 3 V14" stroke="#4c1a9a" stroke-width="1.3" stroke-dasharray="1.3 1.6"/><path d="M5.8 5 L11.2 8.4 L5.8 11.8 Z" fill="#ffffff"/></svg>
<div class="t" style="left:47.4px;top:402.45px;font-size:11.6px;color:#ffffff;transform:scaleX(0.926);transform-origin:0 0;">Videos</div>
<svg style="position:absolute;left:151px;top:403px" width="11" height="11" viewBox="0 0 11 11"><path d="M6.5 0.8 L10.2 4.5 L8.8 5 L7 7.5 L7.5 9 L6.8 9.7 L4.5 7.5 L1.2 10.8 L0.5 10.5 L3.8 6.8 L1.5 4.5 L2.2 3.8 L3.7 4.3 L6.2 2.4 Z" fill="#a9b2bb"/></svg>
<svg style="position:absolute;left:27px;top:430px" width="16" height="16" viewBox="0 0 16 16"><path d="M3.2 2.6 H13.4 L12.3 14 H4.3 Z" fill="url(#recg)"/><rect x="2.8" y="1" width="11" height="1.8" rx="0.6" fill="#dfe6ee"/><path d="M6.2 9.8 L7.3 7.2 L8.6 7.6 M10.6 8.6 L9.8 11 L8 11 M5.8 10.6 L6.5 11.2" stroke="#2d8de0" stroke-width="1.2" fill="none"/></svg>
<div class="t" style="left:47.4px;top:431.58px;font-size:11.6px;color:#ffffff;transform:scaleX(0.926);transform-origin:0 0;">Recycle Bin</div>
<svg style="position:absolute;left:151px;top:432px" width="11" height="11" viewBox="0 0 11 11"><path d="M6.5 0.8 L10.2 4.5 L8.8 5 L7 7.5 L7.5 9 L6.8 9.7 L4.5 7.5 L1.2 10.8 L0.5 10.5 L3.8 6.8 L1.5 4.5 L2.2 3.8 L3.7 4.3 L6.2 2.4 Z" fill="#a9b2bb"/></svg>
<svg style="position:absolute;left:27.8px;top:461px" width="15" height="12" viewBox="0 0 15 12"><path d="M0.5 2.2 Q0.5 0.5 2.2 0.5 H5.6 Q6.4 0.5 7.0 1.1 L7.9 2.0 H13.3 Q14.5 2.0 14.5 3.2 V10.8 Q14.5 12 13.3 12 H1.7 Q0.5 12 0.5 10.8 Z" fill="#e9a812"/>
<path d="M0.5 3.6 H14.5 V10.8 Q14.5 12 13.3 12 H1.7 Q0.5 12 0.5 10.8 Z" fill="url(#fg)"/></svg>
<div class="t" style="left:47.4px;top:460.71px;font-size:11.6px;color:#ffffff;transform:scaleX(0.926);transform-origin:0 0;">watch</div>
<svg style="position:absolute;left:151px;top:462px" width="11" height="11" viewBox="0 0 11 11"><path d="M6.5 0.8 L10.2 4.5 L8.8 5 L7 7.5 L7.5 9 L6.8 9.7 L4.5 7.5 L1.2 10.8 L0.5 10.5 L3.8 6.8 L1.5 4.5 L2.2 3.8 L3.7 4.3 L6.2 2.4 Z" fill="#a9b2bb"/></svg>
<svg style="position:absolute;left:27.8px;top:490px" width="15" height="12" viewBox="0 0 15 12"><path d="M0.5 2.2 Q0.5 0.5 2.2 0.5 H5.6 Q6.4 0.5 7.0 1.1 L7.9 2.0 H13.3 Q14.5 2.0 14.5 3.2 V10.8 Q14.5 12 13.3 12 H1.7 Q0.5 12 0.5 10.8 Z" fill="#e9a812"/>
<path d="M0.5 3.6 H14.5 V10.8 Q14.5 12 13.3 12 H1.7 Q0.5 12 0.5 10.8 Z" fill="url(#fg)"/></svg>
<div class="t" style="left:47.4px;top:489.84px;font-size:11.6px;color:#ffffff;transform:scaleX(0.926);transform-origin:0 0;">watch</div>
<svg style="position:absolute;left:151px;top:491px" width="11" height="11" viewBox="0 0 11 11"><path d="M6.5 0.8 L10.2 4.5 L8.8 5 L7 7.5 L7.5 9 L6.8 9.7 L4.5 7.5 L1.2 10.8 L0.5 10.5 L3.8 6.8 L1.5 4.5 L2.2 3.8 L3.7 4.3 L6.2 2.4 Z" fill="#a9b2bb"/></svg>
<svg style="position:absolute;left:27.8px;top:519px" width="15" height="12" viewBox="0 0 15 12"><path d="M0.5 2.2 Q0.5 0.5 2.2 0.5 H5.6 Q6.4 0.5 7.0 1.1 L7.9 2.0 H13.3 Q14.5 2.0 14.5 3.2 V10.8 Q14.5 12 13.3 12 H1.7 Q0.5 12 0.5 10.8 Z" fill="#e9a812"/>
<path d="M0.5 3.6 H14.5 V10.8 Q14.5 12 13.3 12 H1.7 Q0.5 12 0.5 10.8 Z" fill="url(#fg)"/></svg>
<div class="t" style="left:47.4px;top:518.97px;font-size:11.6px;color:#ffffff;transform:scaleX(0.926);transform-origin:0 0;">favorites</div>
<svg style="position:absolute;left:151px;top:520px" width="11" height="11" viewBox="0 0 11 11"><path d="M6.5 0.8 L10.2 4.5 L8.8 5 L7 7.5 L7.5 9 L6.8 9.7 L4.5 7.5 L1.2 10.8 L0.5 10.5 L3.8 6.8 L1.5 4.5 L2.2 3.8 L3.7 4.3 L6.2 2.4 Z" fill="#a9b2bb"/></svg>
<svg style="position:absolute;left:27.8px;top:549px" width="15" height="12" viewBox="0 0 15 12"><path d="M0.5 2.2 Q0.5 0.5 2.2 0.5 H5.6 Q6.4 0.5 7.0 1.1 L7.9 2.0 H13.3 Q14.5 2.0 14.5 3.2 V10.8 Q14.5 12 13.3 12 H1.7 Q0.5 12 0.5 10.8 Z" fill="#e9a812"/>
<path d="M0.5 3.6 H14.5 V10.8 Q14.5 12 13.3 12 H1.7 Q0.5 12 0.5 10.8 Z" fill="url(#fg)"/></svg>
<div class="t" style="left:47.4px;top:548.10px;font-size:11.6px;color:#ffffff;transform:scaleX(0.926);transform-origin:0 0;">OpenXR-Toolkit</div>
<svg style="position:absolute;left:151px;top:549px" width="11" height="11" viewBox="0 0 11 11"><path d="M6.5 0.8 L10.2 4.5 L8.8 5 L7 7.5 L7.5 9 L6.8 9.7 L4.5 7.5 L1.2 10.8 L0.5 10.5 L3.8 6.8 L1.5 4.5 L2.2 3.8 L3.7 4.3 L6.2 2.4 Z" fill="#a9b2bb"/></svg>
<svg style="position:absolute;left:8.8px;top:608px" width="5" height="9" viewBox="0 0 5 9"><path d="M0.7 0.7 L4.5 4.5 L0.7 8.3" stroke="#cfcfcf" stroke-width="1.35" fill="none"/></svg>
<svg style="position:absolute;left:27px;top:605px" width="16" height="16" viewBox="0 0 16 16"><rect x="0.9" y="0.9" width="14.4" height="10.9" rx="0.4" fill="url(#pcg)"/><path d="M8.1 11.8 V14.3" stroke="#b8d8ec" stroke-width="1.6"/><path d="M4.4 14.6 H11.8" stroke="#d6d6d6" stroke-width="0.9"/></svg>
<div class="t" style="left:47.4px;top:606.36px;font-size:11.6px;color:#ffffff;transform:scaleX(0.926);transform-origin:0 0;">This PC</div>
<svg style="position:absolute;left:8.8px;top:638px" width="5" height="9" viewBox="0 0 5 9"><path d="M0.7 0.7 L4.5 4.5 L0.7 8.3" stroke="#cfcfcf" stroke-width="1.35" fill="none"/></svg>
<svg style="position:absolute;left:27px;top:634px" width="16" height="16" viewBox="0 0 16 16"><path d="M2 8 Q2.6 4.8 5.2 4.8 H11.4 Q14 4.8 14.6 8 Z" fill="#ececec"/><rect x="2" y="7.9" width="12.6" height="3.3" rx="0.5" fill="#a8a8a8"/><rect x="3.2" y="8.4" width="10.6" height="1.5" fill="#4a4a4a"/><rect x="3.2" y="8.4" width="2.2" height="1.5" fill="#2f9a3a"/></svg>
<div class="t" style="left:47.4px;top:635.49px;font-size:11.6px;color:#ffffff;transform:scaleX(0.87044);transform-origin:0 0;">BIBLIOTECA (L:)</div>
<svg style="position:absolute;left:8.8px;top:667px" width="5" height="9" viewBox="0 0 5 9"><path d="M0.7 0.7 L4.5 4.5 L0.7 8.3" stroke="#cfcfcf" stroke-width="1.35" fill="none"/></svg>
<svg style="position:absolute;left:27px;top:663px" width="16" height="16" viewBox="0 0 16 16"><path d="M2 8 Q2.6 4.8 5.2 4.8 H11.4 Q14 4.8 14.6 8 Z" fill="#ececec"/><rect x="2" y="7.9" width="12.6" height="3.3" rx="0.5" fill="#a8a8a8"/><rect x="3.2" y="8.4" width="10.6" height="1.5" fill="#4a4a4a"/><rect x="3.2" y="8.4" width="2.2" height="1.5" fill="#2f9a3a"/></svg>
<div class="t" style="left:47.4px;top:664.62px;font-size:11.6px;color:#ffffff;transform:scaleX(0.89822);transform-origin:0 0;">EMULATION (V:)</div>
<svg style="position:absolute;left:8.8px;top:696px" width="5" height="9" viewBox="0 0 5 9"><path d="M0.7 0.7 L4.5 4.5 L0.7 8.3" stroke="#cfcfcf" stroke-width="1.35" fill="none"/></svg>
<svg style="position:absolute;left:27px;top:692px" width="16" height="16" viewBox="0 0 16 16"><path d="M2 8 Q2.6 4.8 5.2 4.8 H11.4 Q14 4.8 14.6 8 Z" fill="#ececec"/><rect x="2" y="7.9" width="12.6" height="3.3" rx="0.5" fill="#a8a8a8"/><rect x="3.2" y="8.4" width="10.6" height="1.5" fill="#4a4a4a"/><rect x="3.2" y="8.4" width="2.2" height="1.5" fill="#2f9a3a"/></svg>
<div class="t" style="left:47.4px;top:693.75px;font-size:11.6px;color:#ffffff;transform:scaleX(0.926);transform-origin:0 0;">Nuevo vol (W:)</div>
<svg style="position:absolute;left:8.8px;top:725px" width="5" height="9" viewBox="0 0 5 9"><path d="M0.7 0.7 L4.5 4.5 L0.7 8.3" stroke="#cfcfcf" stroke-width="1.35" fill="none"/></svg>
<svg style="position:absolute;left:27px;top:721px" width="16" height="16" viewBox="0 0 16 16"><path d="M2 8 Q2.6 4.8 5.2 4.8 H11.4 Q14 4.8 14.6 8 Z" fill="#ececec"/><rect x="2" y="7.9" width="12.6" height="3.3" rx="0.5" fill="#a8a8a8"/><rect x="3.2" y="8.4" width="10.6" height="1.5" fill="#4a4a4a"/><rect x="3.2" y="8.4" width="2.2" height="1.5" fill="#2f9a3a"/></svg>
<div class="t" style="left:47.4px;top:722.88px;font-size:11.6px;color:#ffffff;transform:scaleX(0.926);transform-origin:0 0;">VR (D:)</div>
<svg style="position:absolute;left:8.8px;top:754px" width="5" height="9" viewBox="0 0 5 9"><path d="M0.7 0.7 L4.5 4.5 L0.7 8.3" stroke="#cfcfcf" stroke-width="1.35" fill="none"/></svg>
<svg style="position:absolute;left:27px;top:750px" width="16" height="16" viewBox="0 0 16 16"><g transform="translate(0,2.8)"><rect x="2.6" y="0.9" width="12.8" height="8.9" rx="0.4" fill="url(#pcg)"/><path d="M9 9.8 V12" stroke="#b8d8ec" stroke-width="1.4"/><path d="M5.6 12.4 H12.4" stroke="#cfcfcf" stroke-width="0.9"/><circle cx="4.9" cy="1.6" r="4" fill="url(#globeg)"/></g></svg>
<div class="t" style="left:47.4px;top:752.01px;font-size:11.6px;color:#ffffff;transform:scaleX(0.926);transform-origin:0 0;">Network</div>
<svg style="position:absolute;left:8.8px;top:783px" width="5" height="9" viewBox="0 0 5 9"><path d="M0.7 0.7 L4.5 4.5 L0.7 8.3" stroke="#cfcfcf" stroke-width="1.35" fill="none"/></svg>
<svg style="position:absolute;left:27px;top:780px" width="16" height="16" viewBox="0 0 16 16"><path d="M8 0.8 Q10.6 0.8 10.8 4 Q11 6.5 12.6 8.6 Q14 10.6 13.2 12.6 L2.8 12.6 Q2 10.6 3.4 8.6 Q5 6.5 5.2 4 Q5.4 0.8 8 0.8 Z" fill="#111111"/><path d="M8 4.6 Q10 6.3 11.2 9.6 Q11.8 12 10 13.4 H6 Q4.2 12 4.8 9.6 Q6 6.3 8 4.6 Z" fill="#f4f4f4"/><path d="M7 4 H9 L8 5.2 Z" fill="#f0b010"/><path d="M0.8 12.8 Q2.4 9.8 4.4 11 L6.2 13.4 Q4.2 15.6 0.8 12.8 Z M15.2 12.8 Q13.6 9.8 11.6 11 L9.8 13.4 Q11.8 15.6 15.2 12.8 Z" fill="#f2b416"/></svg>
<div class="t" style="left:47.4px;top:781.14px;font-size:11.6px;color:#ffffff;transform:scaleX(0.926);transform-origin:0 0;">Linux</div>
<div class="r" style="left:6px;top:233px;width:150px;height:1px;background:#333333;"></div>
<div class="r" style="left:6px;top:583px;width:150px;height:1px;background:#333333;"></div>
<div class="r" style="left:512.5px;top:494.4px;width:260.2px;height:421px;background:#2c2c2c;border:1px solid #3f3f3f;box-sizing:border-box;border-radius:5px;box-shadow:0 8px 16px rgba(0,0,0,0.35);"></div>
<svg width="0" height="0" style="position:absolute"><defs><linearGradient id="prg" x1="0" y1="0" x2="0" y2="1"><stop offset="0" stop-color="#2a8ee6"/><stop offset="1" stop-color="#1a6ac2"/></linearGradient></defs></svg>
<div class="t" style="left:546.6px;top:502.38px;font-size:11.6px;color:#ffffff;transform:scaleX(0.926);transform-origin:0 0;">View</div>
<svg style="position:absolute;left:755px;top:505px" width="5" height="7" viewBox="0 0 5 7"><path d="M0.6 0.6 L4 3.5 L0.6 6.4" stroke="#d8d8d8" stroke-width="1.2" fill="none"/></svg>
<div class="t" style="left:546.6px;top:522.38px;font-size:11.6px;color:#ffffff;transform:scaleX(0.926);transform-origin:0 0;">Sort by</div>
<svg style="position:absolute;left:755px;top:525px" width="5" height="7" viewBox="0 0 5 7"><path d="M0.6 0.6 L4 3.5 L0.6 6.4" stroke="#d8d8d8" stroke-width="1.2" fill="none"/></svg>
<div class="t" style="left:546.6px;top:542.38px;font-size:11.6px;color:#ffffff;transform:scaleX(0.926);transform-origin:0 0;">Group by</div>
<svg style="position:absolute;left:755px;top:545px" width="5" height="7" viewBox="0 0 5 7"><path d="M0.6 0.6 L4 3.5 L0.6 6.4" stroke="#d8d8d8" stroke-width="1.2" fill="none"/></svg>
<div class="t" style="left:546.6px;top:562.38px;font-size:11.6px;color:#ffffff;transform:scaleX(0.926);transform-origin:0 0;">Refresh</div>
<div class="t" style="left:546.6px;top:589.18px;font-size:11.6px;color:#ffffff;transform:scaleX(0.926);transform-origin:0 0;">Customise this folder...</div>
<div class="t" style="left:546.6px;top:615.18px;font-size:11.6px;color:#6c6c6c;transform:scaleX(0.926);transform-origin:0 0;">Paste</div>
<div class="t" style="left:546.6px;top:635.18px;font-size:11.6px;color:#ffffff;transform:scaleX(0.926);transform-origin:0 0;">Undo Move</div>
<div class="t" style="left:722px;top:635.18px;font-size:11.6px;color:#e6e6e6;transform:scaleX(1.00008);transform-origin:0 0;">Ctrl+Z</div>
<div class="t" style="left:546.6px;top:655.18px;font-size:11.6px;color:#ffffff;transform:scaleX(0.926);transform-origin:0 0;">AMD Software: Adrenalin Edition</div>
<svg style="position:absolute;left:522.5px;top:654px" width="15" height="15" viewBox="0 0 15 15"><rect x="0" y="0" width="14.6" height="15" fill="#e3173e"/><path d="M3.6 3.4 H11.2 V11 L9 8.8 V5.6 H5.8 Z" fill="#ffffff"/><path d="M3.6 11.4 V7.6 L5.4 5.8 V9.6 H9.2 L7.4 11.4 Z" fill="#ffffff"/></svg>
<div class="t" style="left:546.6px;top:675.28px;font-size:11.6px;color:#ffffff;transform:scaleX(0.926);transform-origin:0 0;">Abrir en Terminal</div>
<svg style="position:absolute;left:522.5px;top:674px" width="15" height="15" viewBox="0 0 15 15"><rect x="0" y="2" width="14.6" height="10.8" fill="#3c3c3c"/><rect x="0" y="2" width="14.6" height="1.8" fill="#d0d0d0"/><path d="M2 6.2 L5.2 8.6 L2 11" stroke="#ffffff" stroke-width="1.4" fill="none"/><path d="M6.6 10.8 H10.8" stroke="#ffffff" stroke-width="1.3"/></svg>
<div class="t" style="left:546.6px;top:695.08px;font-size:11.6px;color:#ffffff;transform:scaleX(0.926);transform-origin:0 0;">Rename with PowerRename</div>
<svg style="position:absolute;left:522.5px;top:694px" width="15" height="15" viewBox="0 0 15 15"><rect x="0.9" y="4.6" width="11.2" height="5.6" rx="0.8" fill="url(#prg)"/><path d="M9.9 1.9 V12.4 M8.4 1.9 H11.4 M8.4 12.4 H11.4" stroke="#3eb0f5" stroke-width="1.2"/></svg>
<div class="t" style="left:546.6px;top:715.18px;font-size:11.6px;color:#ffffff;transform:scaleX(0.926);transform-origin:0 0;">Open with Visual Studio</div>
<svg style="position:absolute;left:522.5px;top:714px" width="15" height="15" viewBox="0 0 15 15"><path d="M10.6 0.4 L14.6 2.4 V12.6 L10.6 14.6 L5 9.4 L1.9 11.6 L0 10.6 V4.4 L1.9 3.4 L5 5.6 Z M10.6 4.6 L7 7.5 L10.6 10.4 Z M2 6 V9 L3.8 7.5 Z" fill="#8c5fd6" fill-rule="evenodd"/></svg>
<div class="t" style="left:546.6px;top:735.28px;font-size:11.6px;color:#ffffff;transform:scaleX(0.926);transform-origin:0 0;">Open Git GUI here</div>
<svg style="position:absolute;left:522.5px;top:734px" width="15" height="15" viewBox="0 0 15 15"><path d="M7.4 0.6 L14.4 7.5 L7.4 14.4 L0.4 7.5 Z" fill="#f2d77a"/><path d="M7.4 0.6 L10.9 4.05 L7.4 7.5 L3.9 4.05 Z" fill="#e8706a"/><path d="M10.9 4.05 L14.4 7.5 L10.9 10.95 L7.4 7.5 Z" fill="#6fc060"/><path d="M3.9 4.05 L7.4 7.5 L3.9 10.95 L0.4 7.5 Z" fill="#7fb4f4"/><path d="M5.6 2.4 L9.2 6 M6.8 1.8 L10 5" stroke="#3a2a2a" stroke-width="0.6"/><circle cx="9.3" cy="7.6" r="1.2" fill="#2a3a2a"/></svg>
<div class="t" style="left:546.6px;top:755.28px;font-size:11.6px;color:#ffffff;transform:scaleX(0.926);transform-origin:0 0;">Open Git Bash here</div>
<svg style="position:absolute;left:522.5px;top:754px" width="15" height="15" viewBox="0 0 15 15"><path d="M7.4 0.6 L14.4 7.5 L7.4 14.4 L0.4 7.5 Z" fill="#f2d77a"/><path d="M7.4 0.6 L10.9 4.05 L7.4 7.5 L3.9 4.05 Z" fill="#e8706a"/><path d="M10.9 4.05 L14.4 7.5 L10.9 10.95 L7.4 7.5 Z" fill="#6fc060"/><path d="M3.9 4.05 L7.4 7.5 L3.9 10.95 L0.4 7.5 Z" fill="#7fb4f4"/><path d="M5.6 2.4 L9.2 6 M6.8 1.8 L10 5" stroke="#3a2a2a" stroke-width="0.6"/><circle cx="9.3" cy="7.6" r="1.2" fill="#2a3a2a"/></svg>
<div class="t" style="left:546.6px;top:775.28px;font-size:11.6px;color:#ffffff;transform:scaleX(0.926);transform-origin:0 0;">Abrir con Code</div>
<svg style="position:absolute;left:522.5px;top:774px" width="15" height="15" viewBox="0 0 15 15"><path d="M10.6 0.4 L14.6 2.4 V12.6 L10.6 14.6 L5 9.4 L1.9 11.6 L0 10.6 V4.4 L1.9 3.4 L5 5.6 Z M10.6 4.6 L7 7.5 L10.6 10.4 Z" fill="#1f9cf0" fill-rule="evenodd"/></svg>
<div class="t" style="left:546.6px;top:795.28px;font-size:11.6px;color:#ffffff;transform:scaleX(0.926);transform-origin:0 0;">Explorar con XnViewMP</div>
<div class="t" style="left:546.6px;top:815.18px;font-size:11.6px;color:#ffffff;transform:scaleX(0.926);transform-origin:0 0;">Rename with PowerRename</div>
<svg style="position:absolute;left:522.5px;top:814px" width="15" height="15" viewBox="0 0 15 15"><rect x="0.9" y="4.6" width="11.2" height="5.6" rx="0.8" fill="url(#prg)"/><path d="M9.9 1.9 V12.4 M8.4 1.9 H11.4 M8.4 12.4 H11.4" stroke="#3eb0f5" stroke-width="1.2"/></svg>
<div class="t" style="left:546.6px;top:841.88px;font-size:11.6px;color:#ffffff;transform:scaleX(0.926);transform-origin:0 0;">Give access to</div>
<svg style="position:absolute;left:755px;top:844px" width="5" height="7" viewBox="0 0 5 7"><path d="M0.6 0.6 L4 3.5 L0.6 6.4" stroke="#d8d8d8" stroke-width="1.2" fill="none"/></svg>
<div class="t" style="left:546.6px;top:867.88px;font-size:11.6px;color:#ffffff;transform:scaleX(0.926);transform-origin:0 0;">New</div>
<svg style="position:absolute;left:755px;top:870px" width="5" height="7" viewBox="0 0 5 7"><path d="M0.6 0.6 L4 3.5 L0.6 6.4" stroke="#d8d8d8" stroke-width="1.2" fill="none"/></svg>
<div class="t" style="left:546.6px;top:894.58px;font-size:11.6px;color:#ffffff;transform:scaleX(0.926);transform-origin:0 0;">Properties</div>
<div class="r" style="left:517px;top:581px;width:251px;height:1px;background:#3c3c3c;"></div>
<div class="r" style="left:517px;top:608px;width:251px;height:1px;background:#3c3c3c;"></div>
<div class="r" style="left:517px;top:835px;width:251px;height:1px;background:#3c3c3c;"></div>
<div class="r" style="left:517px;top:861px;width:251px;height:1px;background:#3c3c3c;"></div>
<div class="r" style="left:517px;top:887px;width:251px;height:1px;background:#3c3c3c;"></div>
<svg style="position:absolute;left:0px;top:0px" width="1048" height="940" viewBox="0 0 1048 940"><path d="M320.5 725.2 L506 686" stroke="#e8202a" stroke-width="2.2" fill="none"/><path d="M517.8 682.8 L502 679.7 L506.3 693.3 Z" fill="#e8202a"/></svg>
</body></html>
